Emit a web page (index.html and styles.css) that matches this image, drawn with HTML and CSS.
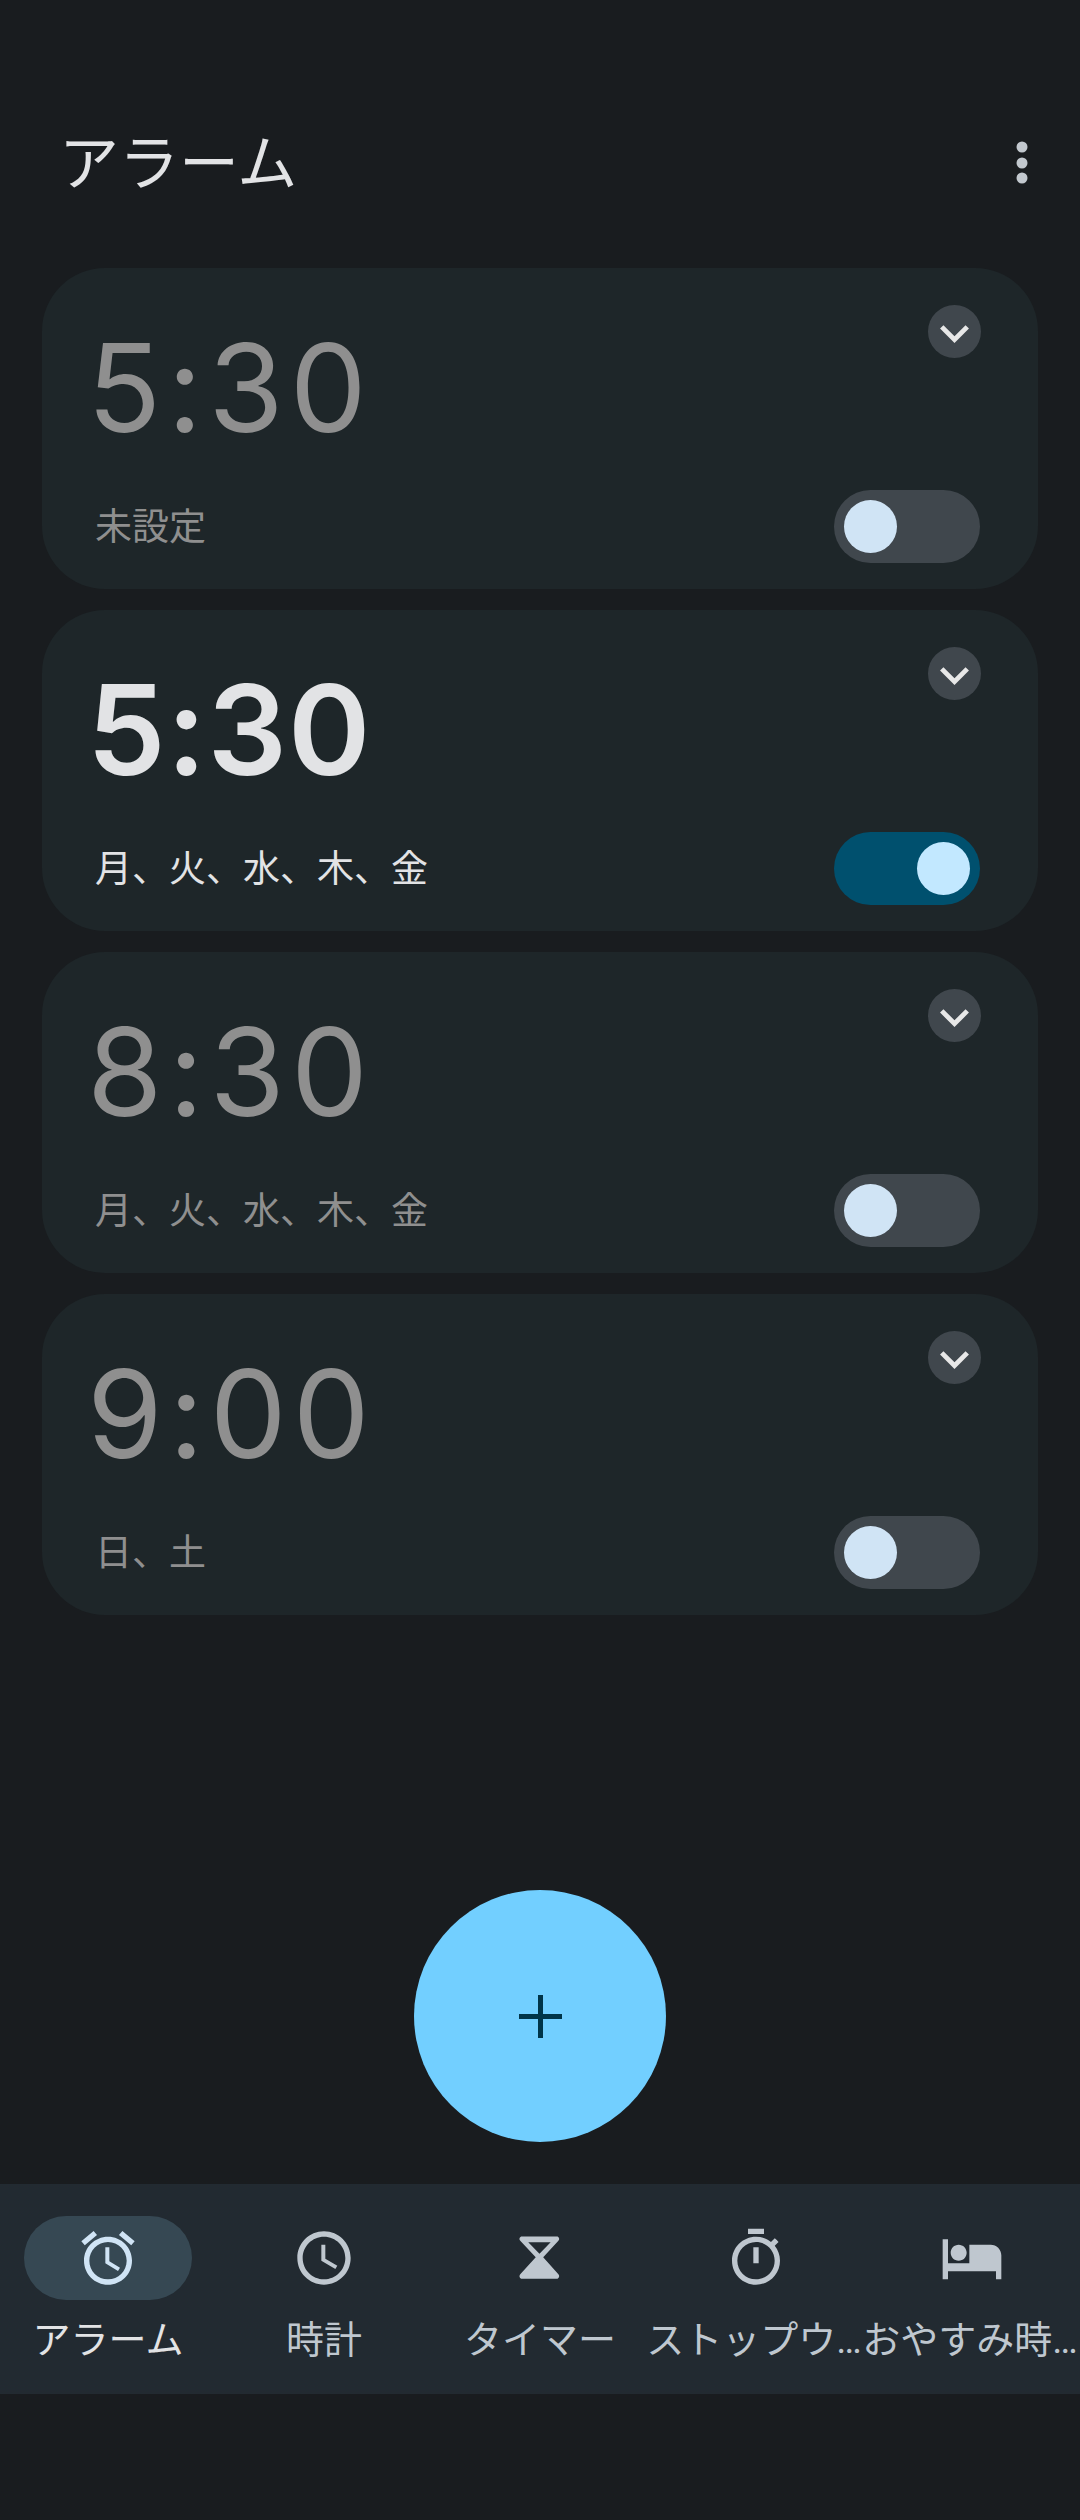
FILE: index.html
```html
<!DOCTYPE html>
<html lang="ja">
<head>
<meta charset="utf-8">
<title>アラーム</title>
<link rel="stylesheet" href="styles.css">
</head>
<body>
<header class="top-bar">
  <h1 class="title">アラーム</h1>
  <svg class="more" viewBox="0 0 16 52"><circle cx="8" cy="10" r="5.5"/><circle cx="8" cy="26" r="5.5"/><circle cx="8" cy="41" r="5.5"/></svg>
</header>
<main class="alarms">
  <article class="card">
    <div class="row-top"><div class="time">5:30</div><span class="expand"><svg viewBox="1 .2 22 22"><path d="M16.59 8.59L12 13.17 7.41 8.59 6 10l6 6 6-6z"/></svg></span></div>
    <div class="row-bottom"><div class="days">未設定</div><span class="toggle"><span class="thumb"></span></span></div>
  </article>
  <article class="card card-on">
    <div class="row-top"><div class="time">5:30</div><span class="expand"><svg viewBox="1 .2 22 22"><path d="M16.59 8.59L12 13.17 7.41 8.59 6 10l6 6 6-6z"/></svg></span></div>
    <div class="row-bottom"><div class="days">月、火、水、木、金</div><span class="toggle"><span class="thumb"></span></span></div>
  </article>
  <article class="card">
    <div class="row-top"><div class="time">8:30</div><span class="expand"><svg viewBox="1 .2 22 22"><path d="M16.59 8.59L12 13.17 7.41 8.59 6 10l6 6 6-6z"/></svg></span></div>
    <div class="row-bottom"><div class="days">月、火、水、木、金</div><span class="toggle"><span class="thumb"></span></span></div>
  </article>
  <article class="card">
    <div class="row-top"><div class="time">9:00</div><span class="expand"><svg viewBox="1 .2 22 22"><path d="M16.59 8.59L12 13.17 7.41 8.59 6 10l6 6 6-6z"/></svg></span></div>
    <div class="row-bottom"><div class="days">日、土</div><span class="toggle"><span class="thumb"></span></span></div>
  </article>
</main>
<div class="fab-wrap">
  <button class="fab" aria-label="追加"><svg viewBox="0 0 43 43"><path d="M19 0h5v19h19v5H24v19h-5V24H0v-5h19z"/></svg></button>
</div>
<nav class="nav">
  <div class="nav-item nav-active">
    <span class="pill"><svg class="icon" viewBox="0 0 24 24"><path d="M22 5.72l-4.6-3.86-1.29 1.53 4.6 3.86L22 5.72zM7.88 3.39L6.6 1.86 2 5.71l1.29 1.53 4.59-3.85zM12.5 8H11v6l4.75 2.85.75-1.23-4-2.37V8zM12 4c-4.97 0-9 4.03-9 9s4.03 9 9 9 9-4.03 9-9-4.03-9-9-9zm0 16c-3.87 0-7-3.13-7-7s3.13-7 7-7 7 3.13 7 7-3.13 7-7 7z"/></svg></span>
    <span class="label">アラーム</span>
  </div>
  <div class="nav-item">
    <span class="pill"><svg class="icon" viewBox="0 0 24 24"><path d="M11.99 2C6.47 2 2 6.48 2 12s4.47 10 9.99 10C17.52 22 22 17.52 22 12S17.52 2 11.99 2zM12 20c-4.42 0-8-3.58-8-8s3.58-8 8-8 8 3.58 8 8-3.58 8-8 8zm.5-13H11v6l5.25 3.15.75-1.23-4.5-2.67z"/></svg></span>
    <span class="label">時計</span>
  </div>
  <div class="nav-item">
    <span class="pill"><svg class="icon" viewBox="0 0 24 24"><path fill-rule="evenodd" d="M5.2 3.9H18.300c.8 0 1.200 1 .6 1.600L13.200 11.700l5.700 6.400c.6.6.2 1.700-.6 1.700H5.200c-.8 0-1.200-1.100-.6-1.700l5.800-6.400L4.600 5.500c-.6-.6-.2-1.600.6-1.600zM7.600 6.060H16l-4.200 4.380z"/></svg></span>
    <span class="label">タイマー</span>
  </div>
  <div class="nav-item">
    <span class="pill"><svg class="icon" viewBox="0 0 24 24"><path d="M15 1H9v2h6V1zm-4 13h2V8h-2v6zm8.030-6.610l1.420-1.420c-.43-.51-.9-.99-1.410-1.410l-1.420 1.420C16.070 4.740 14.120 4 12 4c-4.970 0-9 4.030-9 9s4.020 9 9 9 9-4.030 9-9c0-2.120-.74-4.070-1.970-5.610zM12 20c-3.870 0-7-3.130-7-7s3.130-7 7-7 7 3.130 7 7-3.130 7-7 7z"/></svg></span>
    <span class="label label-cut">ストップウ…</span>
  </div>
  <div class="nav-item">
    <span class="pill"><svg class="icon" viewBox="0 0 24 24"><path d="M7 13c1.660 0 3-1.340 3-3S8.660 7 7 7s-3 1.340-3 3 1.340 3 3 3zm12-6h-8v7H3V5H1v15h2v-3h18v3h2v-9c0-2.210-1.790-4-4-4z"/></svg></span>
    <span class="label label-cut">おやすみ時…</span>
  </div>
</nav>
</body>
</html>
```
FILE: styles.css
```css
* { box-sizing: border-box; }
html, body { margin: 0; padding: 0; }
body {
  width: 1080px;
  height: 2520px;
  background: #191c1f;
  font-family: Roboto, "Noto Sans CJK JP", sans-serif;
  overflow: hidden;
}
.top-bar {
  height: 268px;
  padding: 0 50px 0 59px;
  display: flex;
  justify-content: space-between;
  align-items: flex-start;
}
.title {
  margin: 119px 0 0;
  font-size: 60px;
  line-height: 80px;
  font-weight: 400;
  color: #e2e3e5;
  font-family: "Noto Sans CJK JP", sans-serif;
}
.more { width: 16px; height: 52px; margin-top: 137px; fill: #c2c8ce; }
.alarms { padding: 0 42px; display: flex; flex-direction: column; gap: 21px; }
.card {
  height: 321px;
  background: #1e2629;
  border-radius: 63px;
  padding: 37px 58px 26px 45px;
  display: flex;
  flex-direction: column;
  justify-content: space-between;
}
.row-top, .row-bottom { display: flex; justify-content: space-between; }
.row-top { align-items: flex-start; }
.row-bottom { align-items: center; }
.time {
  margin-top: 8px;
  font-family: Inter, sans-serif;
  font-size: 122px;
  line-height: 150px;
  font-weight: 400;
  letter-spacing: 6px;
  color: #8f8f8f;
}
.days {
  padding: 0 0 6px 8px;
  font-family: "Noto Sans CJK JP", sans-serif;
  font-size: 37px;
  line-height: 50px;
  color: #8f8f8f;
}
.card-on .time { font-size: 125px; font-weight: 600; letter-spacing: 1px; color: #e2e3e5; }
.card-on .days { color: #e2e3e5; }
.expand {
  width: 53px;
  height: 53px;
  margin-right: -1px;
  border-radius: 50%;
  background: #40474d;
  display: flex;
}
.expand svg { width: 53px; height: 53px; fill: #e8e8e8; }
.toggle {
  width: 146px;
  height: 73px;
  border-radius: 37px;
  background: #40474d;
  padding: 10px;
  display: flex;
  justify-content: flex-start;
}
.thumb { width: 53px; height: 53px; border-radius: 50%; background: #d0e4f5; }
.card-on .toggle { background: #00506e; justify-content: flex-end; }
.card-on .thumb { background: #c2e8ff; }
.fab-wrap { margin-top: 275px; display: flex; justify-content: center; }
.fab {
  width: 252px;
  height: 252px;
  border: 0;
  padding: 0;
  border-radius: 50%;
  background: #72cfff;
  display: flex;
  align-items: center;
  justify-content: center;
}
.fab svg { width: 43px; height: 43px; fill: #003549; }
.nav {
  margin-top: 42px;
  height: 210px;
  background: #222a31;
  display: grid;
  grid-template-columns: repeat(5, 216px);
}
.nav-item {
  padding-top: 32px;
  display: flex;
  flex-direction: column;
  align-items: center;
  min-width: 0;
}
.pill {
  width: 168px;
  height: 84px;
  border-radius: 42px;
  display: flex;
  align-items: center;
  justify-content: center;
  flex: none;
}
.nav-active .pill { background: #364853; }
.icon { width: 64px; height: 64px; fill: #bfc7cf; }
.nav-active .icon { fill: #d0e4f5; }
.label {
  margin-top: 15px;
  font-size: 38px;
  line-height: 50px;
  text-align: center;
  color: #bfc7cf;
  white-space: nowrap;
}
.label-cut { margin-right: 4px; }
.nav-active .label { color: #e2e3e5; }
```
